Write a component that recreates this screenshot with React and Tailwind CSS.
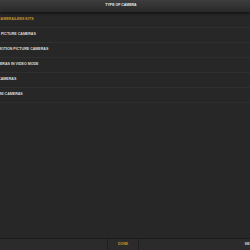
export default function App() {
  const rows = [
    { t: "CAMERA/LENS KITS", ml: "ml-[-2px]", active: true },
    { t: "STILL PICTURE CAMERAS", ml: "ml-[-10px]" },
    { t: "MOTION PICTURE CAMERAS", ml: "ml-[-2px]" },
    { t: "DSLR CAMERAS IN VIDEO MODE", ml: "ml-[-19px]" },
    { t: "VIDEO CAMERAS", ml: "ml-[-14px]" },
    { t: "MINI CAMERAS", ml: "ml-[-4px]" },
  ];
  return (
    <div
      className="w-[250px] h-[250px] bg-[#272727] flex flex-col overflow-hidden"
      style={{ fontFamily: '"Liberation Sans", Arial, sans-serif' }}
    >
      <div className="h-[12px] shrink-0 bg-gradient-to-b from-[#3d3d3d] to-[#292929] flex items-center justify-center pr-[8px] shadow-[0_1px_3px_rgba(0,0,0,0.7)] relative z-10">
        <span className="text-[3.5px] font-semibold text-[#ececec] leading-none">TYPE OF CAMERA</span>
      </div>
      <div className="flex flex-col pt-[0.5px]">
        {rows.map((r, i) => (
          <div
            key={i}
            className="h-[15px] border-b border-[#2f2f2f] flex items-center overflow-hidden whitespace-nowrap"
          >
            <span
              className={`${r.ml} text-[3.6px] font-semibold leading-none ${r.active ? "text-[#c9962e]" : "text-[#dedede]"}`}
            >
              {r.t}
            </span>
          </div>
        ))}
      </div>
      <div className="flex-1" />
      <div className="h-[12px] shrink-0 bg-[#2b2b2b] border-t border-[#1b1b1b] flex items-center relative">
        <div className="w-[108px] h-full border-r border-[#1f1f1f]" />
        <div className="w-[31px] h-full flex items-center justify-center border-r border-[#1f1f1f]">
          <span className="text-[3.5px] font-semibold text-[#c9962e] leading-none">DONE</span>
        </div>
        <div className="flex-1 flex justify-end">
          <span className="text-[3.5px] font-semibold text-[#cccccc] leading-none mr-[-5px]">MENU</span>
        </div>
      </div>
    </div>
  );
}
